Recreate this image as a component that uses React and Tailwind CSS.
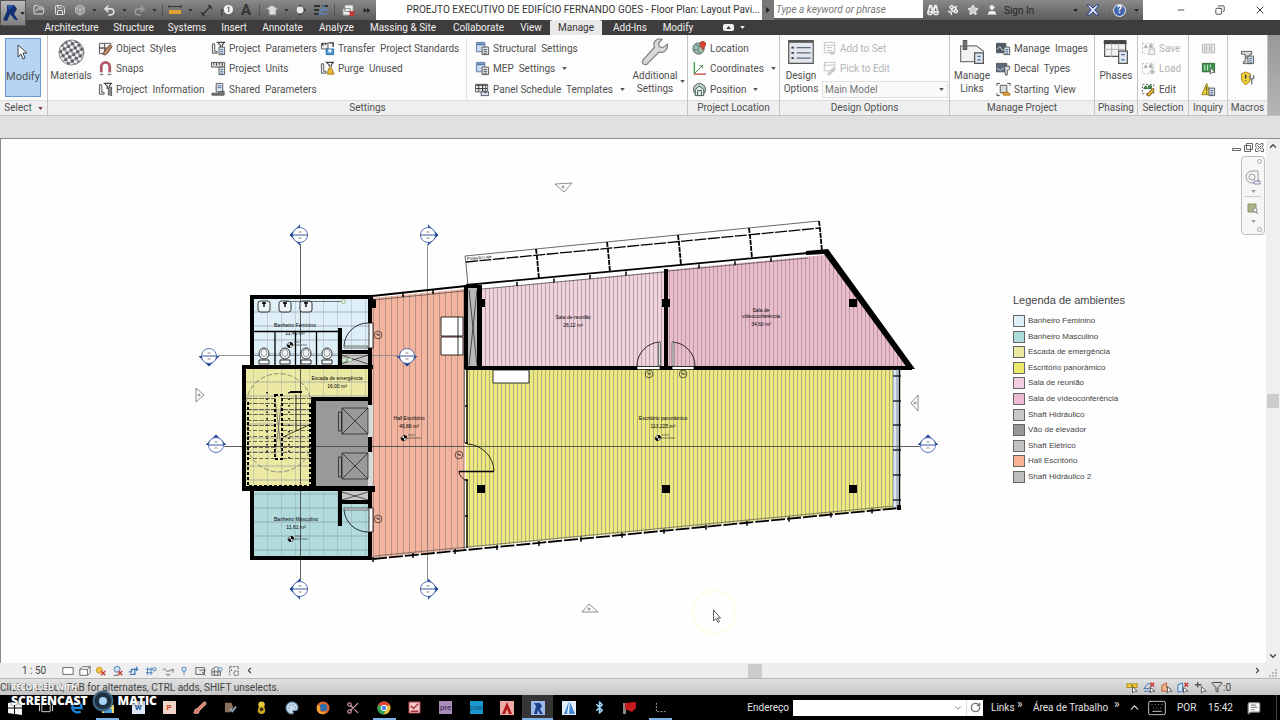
import React from "react";
import {
  FolderOpen, Save, Box, Undo2, Redo2, Binoculars, Satellite, Star, User,
  Minus, X, Copy, Keyboard, MessageSquareText, Bluetooth, ChevronUp, ChevronDown,
  ChevronLeft, ChevronRight, RotateCw, Filter, Palette, Scissors, Brush,
} from "lucide-react";

function Arrow({ className = "" }) {
  return (
    <svg viewBox="0 0 6 4" className={"h-[3px] w-[5px] shrink-0 " + className} fill="currentColor">
      <path d="M0 0h6L3 4z" />
    </svg>
  );
}

/* Ribbon icons, all drawn on a 16 x 16 grid */
function Icon({ name, size = "h-[15px] w-[15px]" }) {
  return (
    <svg viewBox="0 0 16 16" className={"shrink-0 " + size} fill="none" stroke="#555" strokeWidth="1">
      {icons[name]}
    </svg>
  );
}

const ruler = (
  <>
    <path d="M1.500 3v10h5v-2h-2.500V3z" fill="#e8e8e8" />
    <path d="M6 1.500h9M7 1.500l3 3v2M14 1.500l-2 3v2" stroke="#444" strokeWidth="1.200" />
  </>
);

const page = (
  <>
    <path d="M8.500 6.500h6v8h-6z" fill="#dfe8f2" />
    <path d="M10 9h3M10 11h3M10 13h3" stroke="#4a6a90" />
  </>
);

const icons = {
  object: (
    <>
      <path d="M1.500 2.500h12v5h-12zM1.500 7.500h6v6h-6zM7 2.500v11" fill="#f4eded" />
      <path d="M8 9l5-5 2 2-4 6-3 3-3-1z" fill="#b98567" stroke="#6d4637" />
    </>
  ),
  snaps: (
    <>
      <path d="M3.500 14V6a4.500 4.500 0 0 1 9 0v8" stroke="#b2576a" strokeWidth="3" />
      <path d="M2 13h3M11 13h3" stroke="#eee" strokeWidth="2" />
      <path d="M2 14.500h3.500M10.500 14.500H14" stroke="#555" />
    </>
  ),
  info: (
    <>
      {ruler}
      <path d="M9 6.500h2.500v8M14 5v10" stroke="#666" strokeWidth="2" />
    </>
  ),
  params: (
    <>
      {ruler}
      {page}
    </>
  ),
  units: (
    <>
      <path d="M.500 1.500h14v5H.500z" fill="#ddd" />
      <path d="M3 2v2M6 2v3M9 2v2M12 2v3" stroke="#333" />
      {page}
    </>
  ),
  shared: (
    <>
      <path d="M5.500 1.500h7v9h-7z" fill="#dfe8f2" />
      <path d="M7 4h4M7 6h4" stroke="#4a6a90" />
      <path d="M1 12h6l3-2h4v4H1z" fill="#777" />
    </>
  ),
  transfer: (
    <>
      <path d="M1.500 2.500h7v6h-7z" fill="#eee" />
      <path d="M9 2h5v4M3 2v3M6 2v2" stroke="#333" strokeWidth="1.500" />
      <path d="M6.500 8.500h8v6h-8z" fill="#4a9bd8" stroke="#2c6a9e" />
      <path d="M9 9v3h3V9" fill="#fff" stroke="none" />
    </>
  ),
  purge: (
    <>
      {ruler}
      <path d="M9 8l3-1 3 7H8z" fill="#e5b83a" stroke="#a37b14" />
    </>
  ),
  structural: (
    <>
      <path d="M1.500 1.500h9v10h-9z" fill="#c9d9f0" stroke="#5b79a8" />
      <path d="M2 3.500h8" stroke="#5b79a8" strokeWidth="2" />
      <path d="M7.500 6.500h7v8h-7z" fill="#eee" />
      <path d="M9 9h4M9 11h4M9 13h4" stroke="#456" />
    </>
  ),
  panel: (
    <>
      <path d="M.500 2.500h13v8H.500z" fill="#eee" />
      <path d="M1 3.500h12M4 3v7M8 3v7M1 7h12" stroke="#333" />
      <path d="M6.500 10.500h8v4h-8zM11 4v8M9 9l2 3 2-3" fill="#dde6f0" stroke="#556" />
    </>
  ),
  location: (
    <>
      <circle cx="7" cy="8" r="6" fill="#9dbfb2" stroke="#555" />
      <path d="M4 4l4 2-2 3 2 4M2 9l3 1" stroke="#4c6a60" />
      <path d="M11.500 9c-2-3-3-4-3-5.500a3 3 0 0 1 6 0c0 1.500-1 2.500-3 5.500z" fill="#d9452f" stroke="#a23020" />
    </>
  ),
  coords: (
    <>
      <path d="M2.500 1v13" stroke="#46a34f" strokeWidth="1.500" />
      <path d="M2 14h13" stroke="#c9514f" strokeWidth="1.500" />
      <path d="M3 13l8-8M8 5h3v3" stroke="#4b8f55" />
    </>
  ),
  position: (
    <>
      <circle cx="8" cy="8" r="6.500" fill="#b8cfc6" />
      <path d="M3.500 14.500V8l4-3.500 5 3.500v6.500z" fill="#e9eeec" stroke="#3f5a52" />
      <path d="M6 14V9h4v5" stroke="#3f5a52" />
    </>
  ),
  addset: (
    <g stroke="#c2c2c2">
      <path d="M2.500 1.500h11v11h-11zM2 4.500h11M5 7h6M5 10h6" />
      <path d="M8 12l3 3 3-3z" fill="#ccc" />
    </g>
  ),
  pick: (
    <g stroke="#c2c2c2">
      <path d="M2.500 1.500h11v9h-11zM2 4.500h11" />
      <path d="M6 14l6-7 2 2-6 6z" fill="#ccc" />
    </g>
  ),
  images: (
    <>
      <path d="M.500 2.500h10v10H.500z" fill="#4d5a66" />
      <path d="M1 9l3-3 3 4 3-2" stroke="#dfe5ea" />
      {page}
    </>
  ),
  decal: (
    <>
      <path d="M.500 2.500h11v9H.500z" fill="#5a6a7d" />
      <path d="M1 8l4 2 5-4" stroke="#cfdbe8" />
      <path d="M9 5.500h5.500v3L12 10v5h-2z" fill="#d5dde6" />
    </>
  ),
  starting: (
    <>
      <path d="M1 4V1.500h3M12 1.500h3V4M1 12v2.500h3M15 12v1" stroke="#444" />
      <path d="M4.500 3.500h7v8h-7z" fill="#d9dde2" />
      <path d="M7 11h6l2 3H8z" fill="#e9a83c" stroke="#a5701b" />
    </>
  ),
  selsave: (
    <g stroke="#bcbcbc">
      <path d="M1.500 2.500h12v11h-12z" strokeDasharray="2 2" />
      <path d="M3 7l2-3 2 3zM9 4h3v3H9z" fill="#aaa" />
      <path d="M8.500 8.500h6v6h-6z" fill="#eee" />
    </g>
  ),
  selload: (
    <g stroke="#bcbcbc">
      <path d="M1.500 2.500h12v11h-12z" strokeDasharray="2 2" />
      <path d="M3 7l2-3 2 3zM9 4h3v3H9z" fill="#aaa" />
      <path d="M12 8v6M9 11.500h6" strokeWidth="2" />
    </g>
  ),
  seledit: (
    <>
      <path d="M1.500 2.500h12v10h-12z" strokeDasharray="2 2" />
      <path d="M3 7l2-3 2 3zM8 4h3v3H8z" fill="#3f8f4a" stroke="#2c6b36" />
      <path d="M6 14l6-7 2 2-5 6z" fill="#e9b23c" stroke="#7b5a14" />
    </>
  ),
  ids: <path d="M1.500 3.500h13v9h-13zM4 5v6M6 5v6M9 5v6M11 5v6" fill="#e6e6e6" stroke="#b5b5b5" />,
  selids: (
    <>
      <path d="M1.500 2.500h13v9h-13z" fill="#3f9350" stroke="#2c6b36" />
      <path d="M4 4v6M7 4v6M10 4v6" stroke="#d7eeda" />
      <path d="M10 7v7l2-2 3 0z" fill="#fff" />
    </>
  ),
  warn: (
    <>
      <path d="M6 1.500L1 13.500h10z" fill="#f0d53a" stroke="#8b7a16" />
      <path d="M6 5v5M6 11v1.500" stroke="#333" />
      {page}
    </>
  ),
  macro: (
    <>
      <path d="M1.500 1.500h11v3h-2v8h2v2h-9v-2h2v-8h-4z" fill="#ddd" />
      <path d="M6 6.500h3M6 8.500h3" />
      {page}
    </>
  ),
  shield: (
    <>
      <path d="M1.500 3l4.500-2 5 2v5c0 3-2 5-5 6.500C3 13 1.500 11 1.500 8z" fill="#f0cf3f" stroke="#a38315" />
      <path d="M6 4v4M6 10v1" stroke="#333" strokeWidth="1.500" />
      <path d="M10.500 4.500v3l2 1.500v5M14.500 4.500v3l-2 1.500" stroke="#777" strokeWidth="1.500" />
    </>
  ),
  links: (
    <>
      <path d="M1.500 4.500h9l4 3v6h-13z" fill="#f2f2f4" stroke="#777" strokeWidth=".7" />
      <path d="M3 1.500h2v2H3zM3 4.500h2v2H3z" fill="#777" strokeWidth=".6" />
      <path d="M9.500 8.500h5v6h-5z" fill="#dfe8f2" strokeWidth=".7" />
      <path d="M11 10.500h2M11 12.500h2" stroke="#4a6a90" strokeWidth=".8" />
    </>
  ),
  phases: (
    <>
      <path d="M1.500 1.500h12v9h-12z" fill="#f2f2f2" strokeWidth=".7" />
      <path d="M1 2.500h13" stroke="#444" strokeWidth="2" />
      <path d="M5.500 3v8M9.500 3v8M1 6.500h12" stroke="#aaa" strokeWidth=".5" />
      <path d="M9.500 7.500h5v7h-5z" fill="#dfe8f2" strokeWidth=".7" />
      <path d="M11 9.500h2M11 12.500h2" stroke="#4a6a90" strokeWidth=".8" />
    </>
  ),
  options: (
    <>
      <path d="M1 1.500h14v13H1z" fill="#e4e7ec" strokeWidth=".7" />
      <path d="M1 2h14" stroke="#555" strokeWidth="1.500" />
      <path d="M2.500 5.500h1.500M2.500 8.500h1.500M2.500 11.500h1.500" stroke="#445" />
      <path d="M5.500 5.500h8M5.500 8.500h8M5.500 11.500h8" stroke="#5b6880" strokeWidth=".7" />
    </>
  ),
  wrench: (
    <path
      d="M15 3.500l-2.500 2-2-.5-.5-2L12 .8c-2-.8-4 .2-4.500 2-.3 1 0 1.800.2 2.500L1.200 12.500c-1.200 1.800.8 3.500 2.400 2.300L10.300 8c2.600 1 5.300-1.200 4.700-4.500z"
      fill="#d9d9db" stroke="#808083" strokeWidth=".7"
    />
  ),
};

function SmallButton({ icon, label, arrow, disabled }) {
  return (
    <button disabled={disabled} className="flex items-center gap-[3px] whitespace-pre text-left disabled:text-[#b4b4b4]">
      <Icon name={icon} />
      <span>{label}</span>
      {arrow && <Arrow className="ml-1" />}
    </button>
  );
}

function Column({ className, items }) {
  return (
    <div className={"grid h-full shrink-0 grid-rows-3 " + className}>
      {items.map((item) => (
        <SmallButton key={item.label} {...item} />
      ))}
    </div>
  );
}

function Panel({ title, className = "", children, arrow }) {
  return (
    <section className={"flex flex-col border-r border-[#c4c4c4] " + className}>
      <div className="flex h-[65px] pt-[3px]">{children}</div>
      <h2 className="flex h-[15px] items-center justify-center gap-[6px] whitespace-nowrap border-t border-[#dcdcdc] bg-[#efeff0] leading-none text-[#505050]">
        {title}
        {arrow && <Arrow className="text-[#7a3b3b]" />}
      </h2>
    </section>
  );
}

const quickTools = [
  { w: "w-[22px]", label: "Open", el: <FolderOpen size={12} /> },
  { w: "w-5", label: "Save", el: <Save size={12} /> },
  { w: "w-5", label: "Sync", el: <Box size={12} fill="#999" className="text-[#bbb]" /> },
  { w: "w-[9px]", label: "Sync menu", el: <Arrow className="text-[#333]" /> },
  { w: "w-5", label: "Undo", el: <Undo2 size={13} strokeWidth={3} /> },
  { w: "w-[11px]", label: "Undo menu", el: <Arrow className="text-[#333]" /> },
  { w: "w-[18px]", label: "Redo", el: <Redo2 size={13} strokeWidth={3} className="text-[#999]" /> },
  { w: "w-3", label: "Redo menu", el: <Arrow className="text-[#333]" /> },
  { sep: true, w: "w-[5px]", label: "s1" },
  { w: "w-5", label: "Measure", el: <svg viewBox="0 0 14 12" className="h-3 w-[14px]"><path d="M1 2.500h12M1 1v3M13 1v3" stroke="#333" /><path d="M1 6h12v4H1z" fill="#e0a030" /></svg> },
  { w: "w-[11px]", label: "Measure menu", el: <Arrow className="text-[#333]" /> },
  { w: "w-5", label: "Aligned Dimension", el: <svg viewBox="0 0 14 14" className="size-[13px]" stroke="#333" fill="none"><path d="M2 12L12 2M1 9l4 4M9 1l4 4" strokeWidth="1.500" /></svg> },
  { w: "w-5", label: "Tag", el: <svg viewBox="0 0 14 14" className="size-[13px]"><path d="M2 13V6h3" stroke="#333" fill="none" /><circle cx="9" cy="6" r="5" fill="#f3f3f3" /><path d="M8 4.500L9.500 3v6" stroke="#444" fill="none" /></svg> },
  { w: "w-5", label: "Text", el: <span className="text-[15px] font-bold leading-none text-[#333]">A</span> },
  { sep: true, w: "w-[6px]", label: "s2" },
  { w: "w-5", label: "3D View", el: <svg viewBox="0 0 14 12" className="h-3 w-[14px]"><path d="M1 5l6-4 6 4-2 1v5H4V6z" fill="#dcdcdc" stroke="#888" /></svg> },
  { w: "w-[9px]", label: "3D menu", el: <Arrow className="text-[#333]" /> },
  { w: "w-5", label: "Section", el: <svg viewBox="0 0 14 14" className="size-3"><path d="M5 0l8 7-8 7z" fill="#333" /><circle cx="6" cy="7" r="4" fill="#e8e8e8" /></svg> },
  { w: "w-5", label: "Thin Lines", el: <svg viewBox="0 0 14 12" className="h-3 w-[14px]" fill="none"><path d="M0 2h6M8 2h6M0 6h5M0 10h5" stroke="#333" strokeWidth="2" /><path d="M10 1L5 11M8 6h6M7 10h6" stroke="#5b86c4" strokeWidth="1.500" /></svg> },
  { sep: true, w: "w-[7px]", label: "s3" },
  { w: "w-5", label: "Close Hidden", el: <svg viewBox="0 0 14 14" className="size-[13px]"><path d="M3 1h9v7H3zM1 5h8v7H1z" fill="#eee" stroke="#888" /><path d="M8 8l5 5M13 8l-5 5" stroke="#d03030" strokeWidth="2" /></svg> },
  { w: "w-[18px]", label: "More", el: <svg viewBox="0 0 8 6" className="h-[5px] w-2"><path d="M0 0l4 3-4 3zM4 0l4 3-4 3z" fill="#222" /></svg> },
];

function TitleBar() {
  return (
    <header className="flex h-5 bg-linear-to-b from-[#8a8a8a] to-[#5c5c5c] text-[10px]">
      <div className="w-7 shrink-0" />
      <div className="flex shrink-0 text-[#dedede]">
        {quickTools.map((t) =>
          t.sep ? (
            <span key={t.label} className={"my-1 flex justify-center " + t.w}><i className="w-px bg-[#555]" /></span>
          ) : (
            <button key={t.label} aria-label={t.label} className={"flex items-center justify-center " + t.w}>{t.el}</button>
          )
        )}
      </div>
      <h1 className="w-[386px] grow whitespace-nowrap bg-white pr-[2px] text-right leading-[19px] text-[#333]">
        PROEJTO EXECUTIVO DE EDIFÍCIO FERNANDO GOES - Floor Plan: Layout Pavi...
      </h1>
      <button aria-label="Expand search" className="flex w-3 shrink-0 items-center justify-center bg-[#777] text-[#222]">
        <svg viewBox="0 0 4 6" className="h-[6px] w-1" fill="currentColor"><path d="M0 0l4 3-4 3z" /></svg>
      </button>
      <input aria-label="Search" placeholder="Type a keyword or phrase" className="h-[18px] w-[149px] shrink-0 bg-white pl-[2px] text-[10px] italic outline-none placeholder:text-[#777]" />
      <div className="flex w-[220px] shrink-0 items-center text-[#222]">
        <button aria-label="Find" className="flex w-5 justify-center text-[#eee]"><Binoculars size={12} strokeWidth={3} /></button>
        <button aria-label="Exchange" className="flex w-5 justify-center text-[#eee]"><Satellite size={12} strokeWidth={3} /></button>
        <button aria-label="Favorites" className="flex w-5 justify-center text-[#eee]"><Star size={12} fill="#ccc" /></button>
        <button className="flex items-center gap-[6px] pl-[3px]"><User size={12} fill="#eee" className="text-[#eee]" />Sign In</button>
        <Arrow className="ml-auto mr-2" />
        <button aria-label="Apps" className="w-[14px]">
          <svg viewBox="0 0 14 12" className="h-3 w-[14px]"><path d="M1 1h3l3 3 3-3h3L9 6l4 5h-3L7 8l-3 3H1l4-5z" fill="#cfdcf5" stroke="#2c3f86" /></svg>
        </button>
        <i className="ml-[6px] h-3 w-px bg-[#777]" />
        <button aria-label="Help" className="ml-[6px] flex size-[13px] items-center justify-center rounded-full border border-[#eee] bg-[#4566b0] font-bold leading-none text-white">?</button>
        <Arrow className="ml-2 mr-1" />
      </div>
      <div className="flex w-[137px] shrink-0 items-center justify-around bg-white pl-[18px] text-[#333]">
        <button aria-label="Minimize"><Minus size={10} strokeWidth={2} /></button>
        <button aria-label="Restore"><Copy size={10} strokeWidth={2} className="-scale-x-100" /></button>
        <button aria-label="Close"><X size={12} strokeWidth={2} /></button>
      </div>
    </header>
  );
}

const tabs = [
  ["Architecture", "w-[63px]"],
  ["Structure", "w-[61px]"],
  ["Systems", "w-[46px]"],
  ["Insert", "w-[48px]"],
  ["Annotate", "w-[49px]"],
  ["Analyze", "w-[59px]"],
  ["Massing & Site", "w-[74px]"],
  ["Collaborate", "w-[77px]"],
  ["View", "w-[28px]"],
  ["Manage", "mx-[5px] w-[52px] rounded-t-[2px] bg-[#e9e9ea] text-[#333]"],
  ["Add-Ins", "w-[46px]"],
  ["Modify", "w-[50px]"],
];

function Tabs() {
  return (
    <nav className="flex h-[15px] bg-[#3e3c3c] pl-10 text-[10px] leading-[15px] text-[#f1f1f1]">
      {tabs.map(([name, cls]) => (
        <button key={name} className={"shrink-0 whitespace-nowrap text-center " + cls}>{name}</button>
      ))}
      <button aria-label="Minimize ribbon" className="ml-5 flex items-center gap-[6px]">
        <span className="flex h-[7px] w-[11px] items-center justify-center rounded-[2px] bg-[#eee]">
          <Arrow className="rotate-180 text-[#333]" />
        </span>
        <Arrow />
      </button>
    </nav>
  );
}

function BigButton({ icon, className, lines, children }) {
  return (
    <button className={"flex shrink-0 flex-col items-center leading-[13px] " + className}>
      {children || <Icon name={icon} size="mb-[3px] size-[28px]" />}
      {lines.map((l) => (
        <span key={l} className="whitespace-nowrap">{l}</span>
      ))}
    </button>
  );
}

function Ribbon() {
  return (
    <div className="flex h-20 bg-linear-to-b from-[#999] to-[#b5b5b5] text-[10px] text-[#505050]">
      <div className="flex grow bg-[#fdfdfd]">
        <Panel title="Select" arrow className="w-12">
          <button className="ml-[5px] flex h-[59px] w-9 flex-col items-center justify-between border border-[#6a9bd0] bg-[#b5d5f2] pb-[14px] pt-[5px] text-[11px] leading-none">
            <svg viewBox="0 0 12 17" className="h-[17px] w-3"><path d="M1 1v12l3-3 2 5 2-1-2-5h4z" fill="#fff" stroke="#444" /></svg>
            Modify
          </button>
        </Panel>
        <Panel title="Settings" className="w-[640px] grow">
          <BigButton className="w-[46px]" lines={["Materials"]}>
            <svg viewBox="0 0 28 28" className="mb-[3px] mt-px size-[27px]">
              <defs>
                <pattern id="checker" width="7" height="7" patternUnits="userSpaceOnUse" patternTransform="rotate(12)">
                  <path d="M0 0h3.500v3.500H0zM3.500 3.500H7V7H3.500z" fill="#5d6167" />
                </pattern>
              </defs>
              <circle cx="14" cy="14" r="13" fill="#f4f4f4" />
              <circle cx="14" cy="14" r="13" fill="url(#checker)" stroke="#888" />
            </svg>
          </BigButton>
          <Column className="ml-1 w-[113px]" items={[{ icon: "object", label: "Object  Styles" }, { icon: "snaps", label: "Snaps" }, { icon: "info", label: "Project  Information" }]} />
          <Column className="w-[109px]" items={[{ icon: "params", label: "Project  Parameters" }, { icon: "units", label: "Project  Units" }, { icon: "shared", label: "Shared  Parameters" }]} />
          <Column className="w-[147px] border-r border-[#e2e2e2]" items={[{ icon: "transfer", label: "Transfer  Project Standards" }, { icon: "purge", label: "Purge  Unused" }]} />
          <Column className="ml-2 w-[155px]" items={[{ icon: "structural", label: "Structural  Settings" }, { icon: "structural", label: "MEP  Settings", arrow: true }, { icon: "panel", label: "Panel Schedule  Templates", arrow: true }]} />
          <BigButton className="w-[50px]" icon="wrench" lines={["Additional", "Settings"]} />
          <Arrow className="mt-[42px]" />
        </Panel>
        <Panel title="Project Location" className="w-[92px]">
          <Column className="ml-1" items={[{ icon: "location", label: "Location" }, { icon: "coords", label: "Coordinates", arrow: true }, { icon: "position", label: "Position", arrow: true }]} />
        </Panel>
        <Panel title="Design Options" className="w-[170px]">
          <BigButton className="w-[42px]" icon="options" lines={["Design", "Options"]} />
          <div className="grid h-full w-[126px] grid-rows-3 items-center">
            <SmallButton icon="addset" label="Add to Set" disabled />
            <SmallButton icon="pick" label="Pick to Edit" disabled />
            <div className="relative">
              <select aria-label="Active design option" className="h-[17px] w-full appearance-none border border-[#e0e0e0] bg-[#fafafa] pl-[2px] leading-none text-[#777]">
                <option>Main Model</option>
              </select>
              <Arrow className="pointer-events-none absolute right-1 top-[7px]" />
            </div>
          </div>
        </Panel>
        <Panel title="Manage Project" className="w-[145px]">
          <BigButton className="w-11" icon="links" lines={["Manage", "Links"]} />
          <Column className="ml-[2px]" items={[{ icon: "images", label: "Manage  Images" }, { icon: "decal", label: "Decal  Types" }, { icon: "starting", label: "Starting  View" }]} />
        </Panel>
        <Panel title="Phasing" className="w-[43px]">
          <BigButton className="w-[42px]" icon="phases" lines={["Phases"]} />
        </Panel>
        <Panel title="Selection" className="w-[51px]">
          <Column className="ml-[3px]" items={[{ icon: "selsave", label: "Save", disabled: true }, { icon: "selload", label: "Load", disabled: true }, { icon: "seledit", label: "Edit" }]} />
        </Panel>
        <Panel title="Inquiry" className="w-[39px]">
          <div className="grid h-full w-full grid-rows-3 place-items-center">
            {["ids", "selids", "warn"].map((n) => (
              <button key={n} aria-label={n}><Icon name={n} /></button>
            ))}
          </div>
        </Panel>
        <Panel title="Macros" className="w-10">
          <div className="flex w-full flex-col items-center gap-[6px] pt-3">
            <button aria-label="Macro Manager"><Icon name="macro" /></button>
            <button aria-label="Macro Security"><Icon name="shield" /></button>
          </div>
        </Panel>
      </div>
      <div className="w-3 shrink-0" />
    </div>
  );
}

/* Section head: d is the rotation of the arrow, 0 points left */
function Head({ x, y, d = 0 }) {
  return (
    <g transform={`translate(${x} ${y})`}>
      <path d="M0-10.500L-10.500 0 0 10.500z" fill="#1c3f9c" stroke="none" transform={`rotate(${d})`} />
      <circle r="7.500" fill="#fff" stroke="#31569f" strokeWidth=".8" />
      <path d="M-7.500 0h15" stroke="#27408c" strokeWidth=".9" />
      <path d="M-1.500-3h3M-1.500 3h3" stroke="#555" strokeWidth=".7" />
    </g>
  );
}

function RoomLabel({ x, y, lines, level }) {
  return (
    <g>
      {lines.map((l, i) => (
        <text key={l} x={x} y={y + (i === lines.length - 1 ? (i - 1) * 6 + 8 : i * 6)} textAnchor="middle">{l}</text>
      ))}
      {level && (
        <g>
          <circle cx={x - 5} cy={y + 18} r="2.500" fill="#fff" stroke="#000" strokeWidth=".6" />
          <path d={`M${x - 5} ${y + 18}v-3a3 3 0 0 1 3 3zM${x - 5} ${y + 18}v3a3 3 0 0 1-3-3z`} fill="#000" />
          <path d={`M${x - 9} ${y + 18}h21M${x - 1} ${y + 15}h7`} stroke="#333" strokeWidth=".6" strokeDasharray="21 1 2 1" />
        </g>
      )}
    </g>
  );
}

const bottomTicks = [373, 413, 455, 497, 539, 581, 622, 664, 706, 747, 789, 831, 872];
const topTicks = [403, 433, 517, 554, 590, 626, 699, 735, 771];
const bays = [465, 536, 607, 678, 749, 819];
const stairs = [398, 403, 409, 414, 420, 425, 430, 436, 441, 447, 452, 458];

function FloorPlan() {
  return (
    <svg viewBox="190 175 760 470" className="mt-9 h-[470px] w-[760px] shrink-0" fill="none" stroke="#000" fontFamily="Liberation Sans, Arial, sans-serif">
      <defs>
        <pattern id="tile" x="254" y="299" width="14" height="14" patternUnits="userSpaceOnUse">
          <path d="M14 0v14M0 13h14" stroke="#8b98a0" strokeWidth=".7" />
        </pattern>
        <pattern id="deck" width="4" height="8" patternUnits="userSpaceOnUse">
          <path d="M1.500 0v8" stroke="#8d8484" strokeOpacity=".6" strokeWidth="1" />
        </pattern>
        <pattern id="deckWide" width="6" height="8" patternUnits="userSpaceOnUse">
          <path d="M1.500 0v8" stroke="#7d7474" strokeOpacity=".5" strokeWidth="1" />
        </pattern>
      </defs>

      {/* Fills */}
      <g stroke="none">
        <path d="M252 297h118v68H252z" fill="#deeff7" />
        <path d="M252 297h118v68H252z" fill="url(#tile)" />
        <path d="M244 367h126v32h-57v89h-69z" fill="#ece9a4" />
        <path d="M244 367h126v32h-57v89h-69z" fill="url(#tile)" />
        <path d="M314 399h56v89h-56z" fill="#9a9898" />
        <path d="M252 489h118v69H252z" fill="#b1dbdd" />
        <path d="M252 489h118v69H252z" fill="url(#tile)" />
        <path d="M372 298l93-9v260l-93 9z" fill="#f4b39c" />
        <path d="M372 298l93-9v260l-93 9z" fill="url(#deckWide)" />
        <path d="M481 289l184-18v96H481z" fill="#f1d1de" />
        <path d="M481 289l184-18v96H481z" fill="url(#deck)" />
        <path d="M667 270l158-15 84 112H667z" fill="#edbbce" />
        <path d="M667 270l158-15 84 112H667z" fill="url(#deck)" />
        <path d="M466 369h427v139l-427 40z" fill="#ece97f" />
        <path d="M466 369h427v139l-427 40z" fill="url(#deck)" />
        <path d="M893 369h6v139h-6z" fill="#dbe6f6" />
        <path d="M467 288h11v79h-11z" fill="#b9b7b7" />
        <path d="M341 353h28v12h-28zM341 491h28v10h-28z" fill="#c7c7c7" />
        <path d="M368 405h5v32h-5zM368 452h5v35h-5z" fill="#d9d9d9" />
      </g>

      {/* Section lines */}
      <g stroke="#4c4c4c" strokeWidth=".9">
        <path d="M300.500 244v337" />
        <path d="M427.500 244v337" stroke="#8a8080" />
        <path d="M218 355.500h180" stroke="#888" />
        <path d="M224 446.500h696" />
      </g>

      {/* Walls */}
      <g fill="#000" stroke="none">
        <path d="M250 295h123v4H254v66h-4zM242 365h131v4H246v117h129v6h-3v3h-4v-4H254v65h118v4H250v-69h-8z" />
        <path d="M368 299h8v9h-4v15h-4zM368 348h4v57h-4zM368 437h4v15h-4zM368 486h7v6h-3v16h-4zM368 532h4v27h-4z" />
        <path d="M311 397h58v4h-53v86h-5zM338 328h4v37h-4zM338 350h32v4h-32zM338 490h4v36h-4zM338 500h32v4h-32z" />
        <path d="M464 286h4v83h-4zM477 285h5v84h-5zM464 285h18v3h-18z" />
        <path d="M664 269h4v99h-4zM464 366h173v4H464zM660 366h12v4h-12zM694 366h218v4H694z" />
        <path d="M806 251l22-2 87 120h-7l-84-115-18 1z" />
        {[[477, 299], [662, 299], [849, 299], [477, 485], [662, 485], [849, 485]].map(([x, y]) => (
          <rect key={x + "-" + y} x={x} y={y} width="8" height="8" />
        ))}
        <path d="M897 505h4v5h-4z" />
      </g>

      {/* Curtain walls */}
      <path d="M372 296l94-10M466 285l342-32" strokeWidth="1.800" />
      <path d="M373 300l91-9M482 289l182-17M668 271l140-13" stroke="#555" strokeWidth=".8" />
      <path d="M373 559l526-51" strokeWidth="1.800" strokeDasharray="14 2" />
      <path d="M374 556l519-50" stroke="#666" strokeWidth=".8" />
      {bottomTicks.map((x) => (
        <path key={x} d={`M${x} ${557 - (x - 373) * 0.097}v5`} strokeWidth="1.500" />
      ))}
      {topTicks.map((x) => (
        <path key={x} d={`M${x} ${293 - (x - 403) * 0.096}v4`} strokeWidth="1.500" />
      ))}
      <path d="M899.500 369v140" strokeWidth="1.500" />
      <path d="M893 369v138M897 369v138" stroke="#5a6880" strokeWidth=".7" />
      {[376, 401, 425, 450, 475, 500].map((y) => (
        <path key={y} d={`M893 ${y}h8`} strokeWidth="1.200" />
      ))}
      <path d="M464.500 369v74M464.500 480v69" stroke="#777" />
      <path d="M467 369v74M467 480v68" strokeWidth="1.400" />
      <path d="M465 406h3M465 443h3M465 480h3M465 516h3" strokeWidth="1.500" />

      {/* Terrace */}
      <path d="M465 256l354-35" stroke="#444" strokeWidth=".8" />
      <path d="M466 262l354-34" strokeWidth="1.300" strokeDasharray="12 1.500" />
      {bays.map((x, i) => (
        <path key={x} d={`M${x} ${256 - i * 7}l1 8 2 22`} strokeWidth={i ? 1.8 : 0.6} strokeDasharray={i ? "5 1" : "none"} />
      ))}

      {/* Furniture and fixtures */}
      <g strokeWidth=".8">
        <path d="M441 317h22v19h-22zM441 337h22v18h-22zM458 317v38" fill="#fff" />
        <path d="M493 370h36v13h-36z" fill="#fff" />
        {[264, 285, 306].map((x) => (
          <g key={x}>
            <rect x={x - 6} y="301" width="12" height="11" rx="2.500" fill="#eef5f8" />
            <path d={`M${x - 2} 303h4M${x} 302v5`} strokeWidth="1.400" />
          </g>
        ))}
        <path d="M285 301.500h57" stroke="#555" />
        <circle cx="343.500" cy="301.500" r="2" fill="#e9f7e6" stroke="#7cae7a" />
        <path d="M254 331.500h85M275 331v34M295.500 331v34M316.500 331v34" strokeWidth="1.300" />
        {[264, 285, 306, 327].map((x) => (
          <g key={x} fill="#f4fafc">
            <ellipse cx={x} cy="353.500" rx="5" ry="5.500" />
            <ellipse cx={x} cy="353" rx="3" ry="3.500" strokeWidth=".4" />
            <path d={`M${x - 5} 360h10v4h-10z`} />
          </g>
        ))}
        <path d="M341 355l27 9M341 364l27-9M342 492l26 8M342 500l26-8M469 290l8 75M477 290l-8 75" strokeWidth=".6" />
        <circle cx="344" cy="360" r="2" fill="#e9f7e6" stroke="#7cae7a" />
        <circle cx="350" cy="360" r="2" fill="#e9f7e6" stroke="#7cae7a" />
        <path d="M342 408h26v26h-26zM342 408l26 26M368 408l-26 26M342 453h26v26h-26zM342 453l26 26M368 453l-26 26M338.500 412h3v19h-3zM338.500 457h3v20h-3z" strokeWidth=".6" />
      </g>

      {/* Stair */}
      <g strokeWidth=".7">
        {stairs.map((y) => (
          <path key={y} d={`M247 ${y + 0.5}h28M283 ${y + 0.5}h28`} strokeDasharray={y < 430 ? "5 1" : "4 2"} stroke="#333" />
        ))}
        <path d="M246 402a33 33 0 0 1 65-2M247 447a33 33 0 0 0 64 0" strokeDasharray="5 2" stroke="#666" />
        <path d="M283 437l28-13M296 395v35" />
        <path d="M275 395h7v64h-7zM248 402v84h62v-84" strokeWidth="2" strokeDasharray="3 2" />
        <path d="M275 398l7 58M282 398l-7 58" stroke="#555" />
        <path d="M267 392v62M289 392v70" strokeWidth="1.500" strokeDasharray="1.500 5" />
        <path d="M290 392h12" strokeWidth="2" />
      </g>

      {/* Doors */}
      <g strokeWidth=".8">
        <path d="M369 323h4v25h-4zM369 508h4v24h-4zM637 366.500h23v3h-23zM672 366.500h22v3h-22z" fill="#fff" />
        <path d="M344 346a24 24 0 0 1 24-23M344 510a24 24 0 0 0 24 22M637 366a24 24 0 0 1 23-24M672 342a24 24 0 0 1 23 24M467 444a28 28 0 0 1 27 27M459 471a9 9 0 0 0 8 9" />
        <path d="M344 346h24v2h-24zM344 508h24v2h-24zM658.500 342h2v24h-2zM672 342h2v24h-2z" stroke="#555" fill="#d9e3e6" />
        <path d="M459 471.500h35" strokeWidth="1.400" />
        {[[378, 335], [378, 519], [459, 455], [649, 374], [683, 374]].map(([x, y]) => (
          <g key={x + "-" + y} strokeWidth=".6">
            <circle cx={x} cy={y} r="3.800" />
            <path d={`M${x - 2} ${y - 1}h2v2M${x + 1} ${y - 1}v2`} />
          </g>
        ))}
      </g>

      <g fill="#000" stroke="none" fontSize="5">
        <RoomLabel x={295} y={327} lines={["Banheiro Feminino", "11,40 m²"]} level />
        <RoomLabel x={337} y={380} lines={["Escada de emergência", "16,00 m²"]} />
        <RoomLabel x={409} y={420} lines={["Hall Escritório", "40,86 m²"]} level />
        <RoomLabel x={296} y={521} lines={["Banheiro Masculino", "11,61 m²"]} level />
        <RoomLabel x={573} y={319} lines={["Sala de reunião", "26,12 m²"]} />
        <RoomLabel x={761} y={312} lines={["Sala de", "vídeoconferência", "34,60 m²"]} />
        <RoomLabel x={663} y={420} lines={["Escritório panorâmico", "113,225 m²"]} level />
        <text x="467" y="260" transform="rotate(-5 467 260)" fontSize="4">Projeção Laje</text>
      </g>

      {/* Elevation marks */}
      <g strokeWidth=".6" stroke="#444">
        <path d="M555 184l17-1-8 9zM196 388v14l8-7zM918 395v16l-7-8zM582 612h16l-9-8z" />
        <circle cx="563" cy="187" r="1" />
        <circle cx="199" cy="395" r="1" />
        <circle cx="915" cy="403" r="1" />
        <circle cx="589" cy="609" r="1" />
      </g>

      <Head x={300} y={235} />
      <Head x={300} y={589} />
      <Head x={428} y={235} d={180} />
      <Head x={428} y={589} d={180} />
      <Head x={209} y={356} d={270} />
      <Head x={407} y={356} d={270} />
      <Head x={216} y={445} d={90} />
      <Head x={928} y={445} d={90} />

      <circle cx="714" cy="612" r="21" stroke="#fefcec" strokeWidth="3" />
      <path d="M713.500 610v11l2.500-2.500 2 4 1.500-1-2-3.500h3z" fill="#fff" stroke="#333" strokeWidth=".8" />
    </svg>
  );
}

const legend = [
  ["Banheiro Feminino", "bg-[#dff0fa]"],
  ["Banheiro Masculino", "bg-[#addadb]"],
  ["Escada de emergência", "bg-[#ebe8a3]"],
  ["Escritório panorâmico", "bg-[#ebe96e]"],
  ["Sala de reunião", "bg-[#f3cde0]"],
  ["Sala de vídeoconferência", "bg-[#edbbd1]"],
  ["Shaft Hidráulico", "bg-[#c8c8c8]"],
  ["Vão de elevador", "bg-[#989898]"],
  ["Shaft Elétrico", "bg-[#c3c3c3]"],
  ["Hall Escritório", "bg-[#fab294]"],
  ["Shaft Hidráulico 2", "bg-[#bdbdbd]"],
];

function Legend() {
  return (
    <div className="ml-[63px] mt-[154px] w-[140px] font-['Liberation_Sans',Arial,sans-serif] text-[#444]">
      <h3 className="mb-2 whitespace-nowrap text-[11px] leading-[14px]">Legenda de ambientes</h3>
      <ul className="flex h-[168px] flex-col justify-between text-[8px] leading-[12px]">
        {legend.map(([name, color]) => (
          <li key={name} className="flex gap-[3px] whitespace-nowrap">
            <span className={"size-3 border border-[#666] " + color} />
            {name}
          </li>
        ))}
      </ul>
    </div>
  );
}

function NavigationBar() {
  return (
    <div className="ml-auto mr-px flex w-[32px] flex-col items-end">
      <div className="mr-px flex w-8 items-center justify-between pt-1 text-[#666]">
        <button aria-label="Minimize view"><svg viewBox="0 0 9 9" className="size-[9px]" fill="#fff" stroke="currentColor"><path d="M.500 5.500h8v2h-8z" /></svg></button>
        <button aria-label="Restore view"><svg viewBox="0 0 9 9" className="size-[9px]" fill="#fff" stroke="currentColor"><path d="M2.500.500h6v6h-6zM.500 2.500h6v6h-6z" /></svg></button>
        <button aria-label="Close view"><svg viewBox="0 0 9 9" className="size-[9px]" fill="none" stroke="currentColor"><path d="M2.500 2.500l4 4M6.500 2.500l-4 4M1 .5h2l1.500 1.500L6 .5h2v2L7 4.500 8.500 6v2.500H6L4.500 7 3 8.500H.5V6L2 4.500.5 3z" /></svg></button>
      </div>
      <div className="mt-1 flex h-[79px] w-6 flex-col items-center rounded-[4px] border border-[#bbb] bg-[#f6f6f7] text-[#999]">
        <i className="mr-[2px] mt-[2px] size-[5px] self-end rounded-full border border-[#aaa]" />
        <button aria-label="Steering wheel" className="mt-[6px]">
          <svg viewBox="0 0 16 16" className="size-4" fill="none" stroke="#9a9aa4"><path d="M13 12V1H7a6 6 0 0 0 0 12h2" /><circle cx="7" cy="7" r="3" /><path d="M9 11h6v3H9z" stroke="#7c86b0" /></svg>
        </button>
        <Arrow className="mt-[4px] h-[2px]" />
        <i className="my-[3px] h-px w-4 bg-[#ccc]" />
        <button aria-label="Zoom region" className="mt-[3px]">
          <svg viewBox="0 0 12 12" className="size-3"><path d="M1 1h8v8H1z" fill="#a9b486" stroke="#8c9668" /><circle cx="8" cy="7" r="2" fill="#fff" stroke="#888" /><path d="M9 9l2 2" stroke="#777" /></svg>
        </button>
        <Arrow className="mt-[5px] h-[2px]" />
        <i className="mb-[2px] mr-[2px] mt-auto size-[5px] self-end rounded-full border border-[#aaa]" />
      </div>
    </div>
  );
}

function Canvas() {
  return (
    <main className="flex grow border-l border-t border-[#8b8b8b] bg-[#fefefe]">
      <div className="w-[189px] shrink-0" />
      <FloorPlan />
      <Legend />
      <NavigationBar />
      <div className="flex w-[14px] shrink-0 flex-col items-center bg-[#efeff0] text-[#444]">
        <button aria-label="Scroll up" className="mt-[2px]"><ChevronUp size={10} strokeWidth={3} /></button>
        <i className="mt-[243px] h-[14px] w-3 bg-[#cdcdcd]" />
        <button aria-label="Scroll down" className="mb-[2px] mt-auto"><ChevronDown size={10} strokeWidth={3} /></button>
      </div>
    </main>
  );
}

const viewTools = [
  ["Detail Level", <path d="M1 3h12v8H1z" fill="#fff" />],
  ["Visual Style", <path d="M1 5h9v7H1zM1 5l3-3h9v7l-3 3M10 5l3-3" fill="#fff" />],
  ["Sun Path", <><circle cx="5" cy="6" r="3.500" fill="#f4c247" stroke="#c99021" /><path d="M7 7l5 5M12 7l-5 5" stroke="#c0392b" strokeWidth="1.500" /></>],
  ["Shadows", <><circle cx="6" cy="5" r="3.500" fill="#cfe4f5" stroke="#3b76b5" /><path d="M2 12h5" /><path d="M7 7l5 5M12 7l-5 5" stroke="#c0392b" strokeWidth="1.500" /></>],
  ["Crop View", <path d="M1 8h3V5h8M2 11h6V4M10 2v5" stroke="#3b76b5" strokeWidth="1.500" />],
  ["Crop Region", <><path d="M1 5h8M3 3v9M7 3v9M1 9h8" stroke="#3b76b5" /><circle cx="11" cy="5" r="2" stroke="#3b76b5" /></>],
  ["Hide", <path d="M1 5c3-2 4 4 7 2M5 10a2 2 0 1 0 4 0M8 7l5-2v4" />],
  ["Reveal", <><circle cx="7" cy="5" r="2.500" fill="#d7e9fb" stroke="#3b76b5" /><path d="M7 8v4" stroke="#3b76b5" /></>],
  ["Temporary View", <path d="M1 3h10v8H1zM5 6h7l-2 3M8 8l4 4" />],
  ["Analytical", <><path d="M1 5l5-3 5 3v7H1zM4 5v7M8 5v7M1 8h10" /><circle cx="11" cy="5" r="2" fill="#fff" stroke="#3b76b5" /></>],
  ["Constraints", <path d="M2 2v10M2 2h10M12 2v4M7 7h5v5H7zM4 5v2" strokeDasharray="3 1" />],
];

function ViewBar() {
  return (
    <div className="flex h-4 items-center border-b border-[#b5b5b5] bg-[#eeeeef] pl-[22px] text-[#444]">
      <span className="w-[39px] whitespace-nowrap text-[10px]">1 : 50</span>
      <div className="flex w-[180px] justify-between">
        {viewTools.map(([name, shape]) => (
          <button key={name} aria-label={name} className="flex w-[14px] justify-center">
            <svg viewBox="0 0 14 14" className="size-[12px]" fill="none" stroke="#555">{shape}</svg>
          </button>
        ))}
      </div>
      <button aria-label="Scroll left" className="ml-1"><ChevronLeft size={9} strokeWidth={3} /></button>
      <i className="ml-[494px] h-[14px] w-[14px] bg-[#cdcdcd]" />
      <button aria-label="Scroll right" className="ml-auto"><ChevronRight size={9} strokeWidth={3} /></button>
      <svg viewBox="0 0 8 8" className="ml-[7px] mr-[3px] mt-1 size-2" fill="#bbb"><path d="M6 0h2v2H6zM3 3h2v2H3zM6 3h2v2H6zM0 6h2v2H0zM3 6h2v2H3zM6 6h2v2H6z" /></svg>
    </div>
  );
}

const filters = [
  <><path d="M1 3h5v4H1zM7 3h5v4H7z" fill="#f0c93f" stroke="#a98a1b" /><path d="M7 6v7l2-2h3z" fill="#fff" /></>,
  <><path d="M1 8l4-5h5l-3 5zM1 11h7" stroke="#3b76b5" /><path d="M8 2l4 4M12 2L8 6" stroke="#d03030" strokeWidth="1.500" /><path d="M8 7v6l2-2h3z" fill="#fff" /></>,
  <><path d="M2 5l5-3v5l4 1v3H2z" fill="#f0b48f" stroke="#c0552b" /><path d="M8 6v7l2-2h3z" fill="#fff" /></>,
  <><path d="M1 4l5-2v9l-5 1z" fill="#cfe4f5" stroke="#3b76b5" /><path d="M8 2l4 4M12 2L8 6" stroke="#d03030" strokeWidth="1.500" /><path d="M7 7v6l2-2h3z" fill="#fff" /></>,
  <><path d="M1 4h7M4 1v6" strokeWidth="1.500" /><path d="M8 6v7l2-2h3z" fill="#fff" /></>,
];

function StatusBar() {
  return (
    <footer className="flex h-4 items-center bg-linear-to-b from-[#e2e2e2] to-[#c4c4c4] text-[10px] text-[#444]">
      <p className="whitespace-nowrap">Click to select, TAB for alternates, CTRL adds, SHIFT unselects.</p>
      <div className="ml-auto mr-[49px] flex items-center gap-1">
        {filters.map((f, i) => (
          <button key={i} aria-label={"Selection filter " + (i + 1)}>
            <svg viewBox="0 0 14 14" className="size-[13px]" fill="none" stroke="#555">{f}</svg>
          </button>
        ))}
        <span className="flex items-center"><Filter size={12} />:0</span>
      </div>
    </footer>
  );
}

const tile = "flex size-[13px] items-center justify-center text-[8px] font-bold leading-none ";

const apps = [
  ["Start", <svg viewBox="0 0 14 14" className="size-[14px]" fill="#f5f5f5"><path d="M0 2l6-1v5.500H0zM7 1l7-1v6.500H7zM0 7.500h6V13l-6-1zM7 7.500h7V14l-7-1z" /></svg>],
  ["Task View", <svg viewBox="0 0 16 14" className="h-[13px] w-4" fill="none" stroke="#ddd"><path d="M3.500 2.500h9v9h-9zM1 4v7M15 4v7" /></svg>],
  ["Edge", <svg viewBox="0 0 14 14" className="size-[13px]" fill="none" stroke="#1e88e0" strokeWidth="2.500"><path d="M4 7.500h8.500C12.500 3.500 10 2 7.500 2 4 2 2 5 2.500 8s4 5.500 9 3.500" /></svg>],
  ["Explorer", <svg viewBox="0 0 14 12" className="h-3 w-[14px]"><path d="M1 1h5l1 2h6v8H1z" fill="#f3d674" /><path d="M3 7h8v4H3z" fill="#4aa3dc" /></svg>, "open"],
  ["Word", <span className={tile + "bg-[#dfe8f7] text-[#2a5699]"}>W</span>],
  ["PowerPoint", <span className={tile + "bg-[#f0d4c8] text-[#d04a24]"}>P</span>],
  ["Ccleaner", <Brush size={14} fill="#d5715a" className="text-[#e0a090]" />],
  ["Game", <svg viewBox="0 0 14 14" className="size-[13px]"><path d="M1 2h7l2 5-3 5H1z" fill="#8b6f5d" /><path d="M7 8l2 3 4-5" stroke="#8fa7b9" strokeWidth="2" fill="none" /></svg>],
  ["Messenger", <svg viewBox="0 0 14 14" className="size-[13px]"><circle cx="7" cy="4" r="3.500" fill="#e8c73c" /><circle cx="7" cy="10" r="4" fill="#d1a91e" /><circle cx="7" cy="9" r="2" fill="#3b3320" /></svg>],
  ["Paint", <Palette size={14} fill="#c9dbe8" className="text-[#7aa0bb]" />],
  ["Firefox", <svg viewBox="0 0 14 14" className="size-[14px]"><circle cx="7" cy="7" r="6.500" fill="#e2652a" /><circle cx="7.500" cy="6.500" r="3.800" fill="#2d6ea8" /><path d="M1 4c3 0 4 3 3 5s4 3 6 1c-1 4-8 4-9-1z" fill="#f3a534" /></svg>],
  ["Snip", <Scissors size={14} className="text-[#d9a0ad]" />],
  ["Chrome", <svg viewBox="0 0 14 14" className="size-[14px]"><circle cx="7" cy="7" r="6.500" fill="#e9c13b" /><path d="M7 7L1.400 3.700A6.500 6.500 0 0 1 13 4.500H7z" fill="#db4437" /><path d="M7 7L1.400 3.700A6.500 6.500 0 0 0 6.500 13.500L9.500 8z" fill="#2f9e57" /><circle cx="7" cy="7" r="2.800" fill="#4a85e8" stroke="#fff" /></svg>, "open"],
  ["Recorder", <svg viewBox="0 0 14 14" className="size-[13px]"><path d="M1 1h12v12H1z" fill="#f3c9cc" stroke="#a5323c" /><path d="M3 5l3 3 5-5M3 11h8" stroke="#a5323c" strokeWidth="1.500" fill="none" /></svg>],
  ["Premiere", <span className={tile + "bg-[#a78cb8] font-normal text-[#35204a]"}>pre</span>],
  ["Photoshop", <span className={tile + "bg-[#1b9ad0] font-normal text-[#0a4a70]"}>pse</span>],
  ["AutoCAD", <svg viewBox="0 0 14 14" className="size-[14px]"><path d="M0 0h14v14H0z" fill="#eda9a3" /><path d="M7 1l5 12H9L7 8l-2 5H2z" fill="#b5181c" /></svg>],
  ["Revit", <svg viewBox="0 0 14 14" className="size-[14px]"><path d="M0 0h14v14H0z" fill="#9dbbe8" /><path d="M3 2h6l2 3-2 3 3 5H9L7 9l-1 4H3l2-8z" fill="#1d3f8a" /></svg>, "active"],
  ["Max", <svg viewBox="0 0 14 14" className="size-[14px]"><path d="M0 0h14v14H0z" fill="#e4eefa" /><path d="M7 0l-5 13h3zM8 1l5 12H7z" fill="#3d86d8" /></svg>],
  ["Bluetooth", <Bluetooth size={13} strokeWidth={3} className="text-[#9bd0f5]" />],
  ["SketchUp", <svg viewBox="0 0 14 14" className="size-[14px]"><path d="M0 2h3v11H0z" fill="#888" /><path d="M2 2l11-1v6l-4 4-7-3z" fill="#c71a1f" /></svg>],
  ["Command", <svg viewBox="0 0 12 12" className="size-[11px]"><path d="M1.500 1v9.500h10" stroke="#bbb" strokeDasharray="2 1.500" fill="none" /></svg>, "open"],
];

const appState = {
  open: "after:absolute after:inset-x-[4px] after:bottom-0 after:h-[2px] after:bg-[#7db2e8]",
  active: "bg-[#353535] after:absolute after:inset-x-0 after:bottom-0 after:h-[2px] after:bg-[#7db2e8]",
};

function Taskbar() {
  return (
    <div className="flex h-[25px] bg-black text-[10px] text-[#e2e2e2]">
      <div className="flex w-[676px] shrink-0">
        {apps.map(([name, icon, state]) => (
          <button key={name} aria-label={name} className={"relative flex flex-1 items-center justify-center " + (appState[state] || "")}>
            {icon}
          </button>
        ))}
      </div>
      <div className="ml-auto flex items-center">
        <label htmlFor="address" className="mr-1">Endereço</label>
        <div className="flex h-4 w-[190px] items-center bg-white text-[#777]">
          <input id="address" className="w-[160px] bg-white outline-none" />
          <ChevronDown size={10} />
          <i className="mx-[3px] h-4 w-px bg-[#ddd]" />
          <RotateCw size={11} strokeWidth={3} />
        </div>
        <a href="#links" className="ml-2 w-[22px]">Links</a>
        <span className="mb-2 ml-[4px] w-2 text-[12px] leading-none">»</span>
        <a href="#desktop" className="ml-2 w-[76px] whitespace-nowrap">Área de Trabalho</a>
        <span className="mb-2 ml-[5px] w-2 text-[12px] leading-none">»</span>
        <button aria-label="Show hidden icons" className="ml-[6px]"><ChevronUp size={13} /></button>
        <button aria-label="Keyboard" className="ml-[6px]"><Keyboard size={20} strokeWidth={1} /></button>
        <span className="ml-[10px] w-[20px]">POR</span>
        <time className="ml-[11px] w-[25px]">15:42</time>
        <button aria-label="Notifications" className="ml-[14px] mr-[15px]"><MessageSquareText size={14} fill="#fff" className="text-[#888]" /></button>
        <i className="h-[25px] w-[4px] border-l border-[#444]" />
      </div>
    </div>
  );
}

function Watermark() {
  return (
    <div className="pointer-events-none absolute bottom-3 left-[11px] font-['Open_Sans',sans-serif] font-bold leading-none text-white">
      <p className="mb-[3px] text-[8px] [text-shadow:0_0_1px_#555]">RECORDED WITH</p>
      <p className="flex h-[14px] items-center text-[12px] font-extrabold [text-shadow:0_0_2px_#000]">
        SCREENCAST
        <svg viewBox="0 0 22 22" className="mx-1 size-[22px]"><circle cx="11" cy="11" r="9.500" fill="#1f3140" stroke="#456a86" strokeWidth="2" /><circle cx="11" cy="11" r="4" fill="#a9d3f2" /></svg>
        MATIC
      </p>
    </div>
  );
}

export default function App() {
  return (
    <div className="relative flex min-h-screen flex-col overflow-hidden bg-[#dfe0e2] font-[Roboto,'Open_Sans',sans-serif]">
      <TitleBar />
      <Tabs />
      <button aria-label="Application menu" className="absolute left-0 top-0 flex h-[26px] w-[26px] items-center gap-px border border-[#555] bg-linear-to-b from-[#b9b9b9] to-[#808080] pl-[2px] text-[#222]">
        <svg viewBox="0 0 16 18" className="h-[18px] w-4"><path d="M4 1h7l3 4-3 5 4 6h-3l-5-6-3 7-4-1 4-9z" fill="#123074" /><path d="M4 1h7l-5 5z" fill="#2b55a8" /></svg>
        <Arrow />
      </button>
      <Ribbon />
      <div className="h-[23px] shrink-0 border-t border-[#c4c4c4]" />
      <Canvas />
      <ViewBar />
      <StatusBar />
      <Taskbar />
      <Watermark />
    </div>
  );
}
